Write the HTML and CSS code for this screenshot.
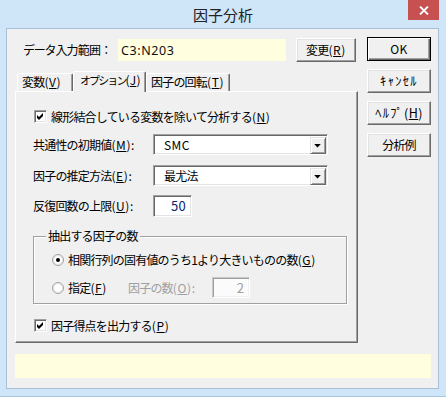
FILE: index.html
```html
<!DOCTYPE html>
<html lang="ja">
<head>
<meta charset="utf-8">
<title>因子分析</title>
<link rel="stylesheet" href="styles.css">
</head>
<body>
<div class="window">
  <div class="titlebar">
    <span class="title">因子分析</span>
    <div class="close"><svg width="10" height="9" viewBox="0 0 10 9"><path d="M1 0.5 L9 8.5 M9 0.5 L1 8.5" stroke="#fff" stroke-width="1.8"/></svg></div>
  </div>
  <div class="client">
    <div class="main">
      <div class="left">
        <div class="toprow">
          <span class="range-label"><span class="kana">データ</span>入力範囲：</span>
          <div class="range">C3:N203</div>
          <div class="btn btn-change">変更<span class="key">(<u>R</u>)</span></div>
        </div>
        <div class="tabs">
          <div class="tab tab-vars">変数<span class="key">(<u>V</u>)</span></div>
          <div class="tab tab-opt active"><span class="tab-kana">オプション</span><span class="key">(<u>J</u>)</span></div>
          <div class="tab tab-rot">因子の回転<span class="key">(<u>T</u>)</span></div>
        </div>
        <div class="panel">
          <div class="check-row row-exclude">
            <span class="checkbox"><svg width="13" height="13" viewBox="0 0 13 13"><path d="M3 5 L5 7 L9 3 L9 6 L5 10 L3 8 Z" fill="#000"/></svg></span>
            <span class="check-label">線形結合している変数を除いて分析する<span class="key">(<u>N</u>)</span></span>
          </div>
          <div class="field-row row-comm">
            <span class="field-label">共通性の初期値<span class="key">(<u>M</u>):</span></span>
            <div class="combo"><span class="combo-text latin">SMC</span><span class="combo-btn"><svg width="16" height="17" viewBox="0 0 16 17"><path d="M4.5 7 H11.5 L8 10.5 Z" fill="#000"/></svg></span></div>
          </div>
          <div class="field-row row-method">
            <span class="field-label">因子の推定方法<span class="key">(<u>E</u>):</span></span>
            <div class="combo"><span class="combo-text">最尤法</span><span class="combo-btn"><svg width="16" height="17" viewBox="0 0 16 17"><path d="M4.5 7 H11.5 L8 10.5 Z" fill="#000"/></svg></span></div>
          </div>
          <div class="field-row row-iter">
            <span class="field-label">反復回数の上限<span class="key">(<u>U</u>):</span></span>
            <div class="textbox iter-box">50</div>
          </div>
          <div class="group">
            <span class="group-title">抽出する因子の数</span>
            <div class="radio-row radio-first">
              <span class="radio"><svg width="12" height="12" viewBox="0 0 12 12"><circle cx="6" cy="6" r="5.5" fill="#fff" stroke="#a0a0a0"/><circle cx="6" cy="6" r="4.5" fill="none" stroke="#dcdcdc"/><circle cx="6" cy="6" r="2" fill="#000"/></svg></span>
              <span class="radio-label">相関行列の固有値のうち1より大きいものの数<span class="key">(<u>G</u>)</span></span>
            </div>
            <div class="radio-row radio-second">
              <span class="radio"><svg width="12" height="12" viewBox="0 0 12 12"><circle cx="6" cy="6" r="5.5" fill="#fff" stroke="#a0a0a0"/><circle cx="6" cy="6" r="4.5" fill="none" stroke="#dcdcdc"/></svg></span>
              <span class="radio-label spec-label">指定<span class="key">(<u>F</u>)</span></span>
              <span class="disabled-label">因子の数<span class="key">(<u>O</u>):</span></span>
              <div class="textbox num-box">2</div>
            </div>
          </div>
          <div class="check-row row-scores">
            <span class="checkbox"><svg width="13" height="13" viewBox="0 0 13 13"><path d="M3 5 L5 7 L9 3 L9 6 L5 10 L3 8 Z" fill="#000"/></svg></span>
            <span class="check-label">因子得点を出力する<span class="key">(<u>P</u>)</span></span>
          </div>
        </div>
      </div>
      <div class="right">
        <div class="btn btn-side btn-default latin">OK</div>
        <div class="btn btn-side halfkana">ｷｬﾝｾﾙ</div>
        <div class="btn btn-side halfkana">ﾍﾙﾌﾟ<span class="key">(<u>H</u>)</span></div>
        <div class="btn btn-side">分析例</div>
      </div>
    </div>
    <div class="status"></div>
  </div>
</div>
</body>
</html>
```

FILE: styles.css
```css
* { box-sizing: border-box; }
html, body { margin: 0; padding: 0; }
body {
  width: 446px;
  height: 397px;
  overflow: hidden;
  background: #cfe5f8;
  font-family: "Noto Sans CJK JP", "Noto Sans", sans-serif;
  font-size: 12px;
  letter-spacing: -0.8px;
  color: #000;
}
u { text-decoration: underline; text-underline-offset: 1px; text-decoration-thickness: 1px; }
.key { letter-spacing: 0.6px; }
.kana { letter-spacing: -1.2px; }
.latin { letter-spacing: 0.4px; }

.window {
  position: relative;
  width: 446px;
  height: 397px;
  background: #cfe5f8;
  box-shadow: inset 0 -1px 0 #a9c6e2;
}
.titlebar {
  height: 28px;
  display: flex;
  justify-content: center;
  align-items: center;
}
.title {
  font-size: 15px;
  letter-spacing: 0;
  color: #222;
  line-height: 20px;
  padding-top: 2px;
}
.close {
  position: absolute;
  top: 0;
  right: 7px;
  width: 31px;
  height: 20px;
  background: #c75050;
  display: flex;
  align-items: center;
  justify-content: center;
}

.client {
  margin-left: 6px;
  width: 433px;
  height: 361px;
  background: #f0f0f0;
  border: 1px solid #a9c0d8;
}
.main {
  display: flex;
  padding: 8px 0 0 8px;
}
.left { width: 343px; }
.right {
  margin-left: 9px;
  width: 64px;
  display: flex;
  flex-direction: column;
  gap: 8px;
}

.btn {
  display: flex;
  align-items: center;
  justify-content: center;
  background: #f0f0f0;
  border-top: 1px solid #fff;
  border-left: 1px solid #fff;
  border-right: 1px solid #696969;
  border-bottom: 1px solid #696969;
  box-shadow: inset -1px -1px 0 #a0a0a0, inset 1px 1px 0 #e3e3e3;
  line-height: 16px;
  white-space: nowrap;
}
.btn-side { height: 24px; width: 64px; }
.btn-default {
  border: 1px solid #000;
  box-shadow: inset 1px 1px 0 #fff, inset -1px -1px 0 #696969, inset -2px -2px 0 #a0a0a0;
}
.halfkana { font-size: 12.5px; letter-spacing: 1.3px; }
.halfkana .key { letter-spacing: 0.4px; }

.toprow {
  margin-top: 1px;
  height: 24px;
  display: flex;
  align-items: center;
}
.range-label {
  margin-left: 8px;
  width: 95px;
  flex: none;
  line-height: 16px;
  white-space: nowrap;
}
.range {
  width: 168px;
  height: 22px;
  background: #ffffdf;
  display: flex;
  align-items: center;
  padding-left: 3px;
  font-family: "Noto Sans", sans-serif;
  font-size: 12.5px;
  letter-spacing: 0.6px;
  color: #101010;
}
.btn-change {
  margin-left: 10px;
  width: 60px;
  height: 24px;
}

.tabs {
  margin-top: 9px;
  height: 20px;
  display: flex;
  align-items: flex-end;
  padding-left: 2px;
}
.tab {
  height: 18px;
  line-height: 16px;
  background: #f0f0f0;
  border-top: 1px solid #fff;
  border-left: 1px solid #fff;
  border-right: 1px solid #696969;
  box-shadow: inset -1px 0 0 #a0a0a0;
  border-radius: 2px 2px 0 0;
  white-space: nowrap;
  overflow: hidden;
}
.tab-vars { width: 56px; padding-left: 4px; }
.tab-opt { width: 73px; padding-left: 6px; }
.tab-rot { width: 84px; padding-left: 4px; }
.tab-kana { font-size: 11px; letter-spacing: -1.9px; }
.tab-opt .key { letter-spacing: 0.2px; }
.tab.active {
  position: relative;
  z-index: 2;
  height: 21px;
  margin-bottom: -1px;
  line-height: 15px;
}

.panel {
  width: 343px;
  height: 252px;
  background: #f0f0f0;
  border-top: 1px solid #fff;
  border-left: 1px solid #fff;
  border-right: 1px solid #696969;
  border-bottom: 1px solid #696969;
  box-shadow: inset -1px -1px 0 #a0a0a0;
  padding-left: 17px;
  display: flex;
  flex-direction: column;
}

.check-row {
  height: 13px;
  display: flex;
  align-items: center;
}
.checkbox {
  width: 13px;
  height: 13px;
  margin-left: 1px;
  flex: none;
  background: #fff;
  border-top: 1px solid #a0a0a0;
  border-left: 1px solid #a0a0a0;
  border-right: 1px solid #fff;
  border-bottom: 1px solid #fff;
  box-shadow: inset 1px 1px 0 #696969, inset -1px -1px 0 #e3e3e3;
  position: relative;
}
.checkbox svg { position: absolute; left: -1px; top: -1px; }
.check-label { margin-left: 4px; line-height: 16px; white-space: nowrap; }
.row-exclude { margin-top: 18px; }
.row-scores { margin-top: 15px; }

.field-row {
  display: flex;
  align-items: center;
}
.field-label { width: 120px; flex: none; line-height: 16px; white-space: nowrap; }
.row-comm { margin-top: 11px; height: 21px; }
.row-method { margin-top: 10px; height: 21px; }
.row-iter { margin-top: 9px; height: 22px; }

.combo {
  width: 175px;
  height: 21px;
  display: flex;
  align-items: center;
  background: #fff;
  border-top: 1px solid #a0a0a0;
  border-left: 1px solid #a0a0a0;
  border-right: 1px solid #fff;
  border-bottom: 1px solid #fff;
  box-shadow: inset 1px 1px 0 #696969, inset -1px -1px 0 #e3e3e3;
}
.combo-text { flex: 1; padding-left: 10px; line-height: 16px; }
.combo-btn {
  width: 16px;
  height: 17px;
  margin-right: 1px;
  margin-top: 1px;
  display: flex;
  background: #f0f0f0;
  border-top: 1px solid #e3e3e3;
  border-left: 1px solid #e3e3e3;
  border-right: 1px solid #696969;
  border-bottom: 1px solid #696969;
  box-shadow: inset 1px 1px 0 #fff, inset -1px -1px 0 #a0a0a0;
}
.combo-btn svg { margin: -1px 0 0 -1px; }

.textbox {
  display: flex;
  align-items: center;
  justify-content: flex-end;
  background: #fff;
  border-top: 1px solid #a0a0a0;
  border-left: 1px solid #a0a0a0;
  border-right: 1px solid #fff;
  border-bottom: 1px solid #fff;
  box-shadow: inset 1px 1px 0 #696969, inset -1px -1px 0 #e3e3e3;
  line-height: 16px;
}
.iter-box {
  width: 39px;
  height: 22px;
  padding-right: 5px;
  color: #0d2470;
  font-size: 13px;
  letter-spacing: 0.3px;
}
.num-box {
  width: 38px;
  height: 21px;
  padding-right: 5px;
  color: #a0a0a0;
  font-size: 13px;
  letter-spacing: 0;
  background: #fbfbfb;
  border-top-color: #c8c8c8;
  border-left-color: #c8c8c8;
  box-shadow: inset 1px 1px 0 #a0a0a0, inset -1px -1px 0 #f0f0f0;
}

.group {
  position: relative;
  margin-top: 19px;
  width: 314px;
  height: 68px;
  border: 1px solid #a0a0a0;
  box-shadow: inset 1px 1px 0 #fff, 1px 1px 0 #fff;
  padding-left: 18px;
  display: flex;
  flex-direction: column;
}
.group-title {
  position: absolute;
  top: -9px;
  left: 12px;
  padding: 0 2px;
  background: #f0f0f0;
  line-height: 16px;
  white-space: nowrap;
}
.radio-row { display: flex; align-items: center; }
.radio-first { margin-top: 15px; height: 16px; }
.radio-second { margin-top: 9px; height: 21px; }
.radio { width: 12px; height: 12px; flex: none; display: flex; }
.radio-label { margin-left: 4px; line-height: 16px; white-space: nowrap; }
.spec-label { width: 60px; flex: none; }
.disabled-label { width: 84px; flex: none; color: #a0a0a0; line-height: 16px; white-space: nowrap; }

.status {
  margin: 11px 0 0 8px;
  width: 416px;
  height: 24px;
  background: #ffffdf;
}
```
